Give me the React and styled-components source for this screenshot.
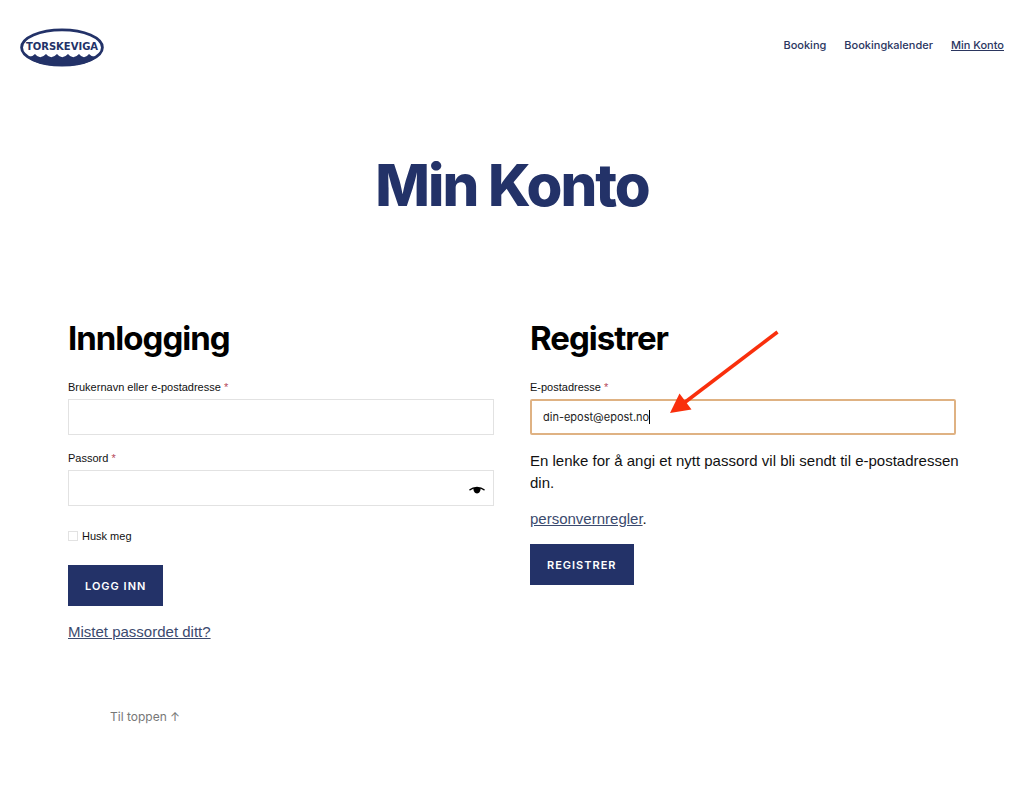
import React, { useState } from "react";

import styled, { createGlobalStyle } from "styled-components";

export default function App() {
  const [email, setEmail] = useState("din-epost@epost.no");

  return (
    <>
      <GlobalStyle />
      <Header id="top">
        <a href="#top" aria-label="Torskeviga">
          <Logo />
        </a>
        <Nav>
          <NavLink href="#booking">Booking</NavLink>
          <NavLink href="#kalender">Bookingkalender</NavLink>
          <NavLink href="#konto" $active>
            Min Konto
          </NavLink>
        </Nav>
      </Header>

      <main>
        <PageTitle>Min Konto</PageTitle>
        <Columns>
          <Form>
            <FormTitle>Innlogging</FormTitle>
            <Field>
              <Label htmlFor="username">
                Brukernavn eller e-postadresse <Required>*</Required>
              </Label>
              <Input id="username" type="text" />
            </Field>
            <Field>
              <Label htmlFor="password">
                Passord <Required>*</Required>
              </Label>
              <InputWrap>
                <Input id="password" type="password" />
                <EyeButton type="button" aria-label="Vis passord">
                  <EyeIcon />
                </EyeButton>
              </InputWrap>
            </Field>
            <Remember>
              <Checkbox type="checkbox" />
              Husk meg
            </Remember>
            <Button type="button">Logg inn</Button>
            <Text>
              <Link href="#passord">Mistet passordet ditt?</Link>
            </Text>
          </Form>

          <Form>
            <FormTitle>Registrer</FormTitle>
            <Field>
              <Label htmlFor="email">
                E-postadresse <Required>*</Required>
              </Label>
              <InputWrap>
                <Input
                  id="email"
                  type="email"
                  value={email}
                  onChange={(e) => setEmail(e.target.value)}
                  $focused
                />
                <Caret />
                <Arrow />
              </InputWrap>
            </Field>
            <Text>
              En lenke for å angi et nytt passord vil bli sendt til
              e-postadressen din.
            </Text>
            <Text>
              <Link href="#personvern">personvernregler</Link>.
            </Text>
            <Button type="button">Registrer</Button>
          </Form>
        </Columns>
      </main>

      <Footer>
        <ToTop href="#top">Til toppen ↑</ToTop>
      </Footer>
    </>
  );
}

const Logo = () => (
  <LogoSvg viewBox="0 0 84 40">
    <path
      d="M4 26 Q10 31 15 26 Q20 32.5 26 26 Q31 32.5 37 26 Q42 32.5 48 26 Q53 32.5 59 26 Q64 32.5 69 26 Q74 31 80 26 C73 35 58 38 42 38 C26 38 11 35 4 26Z"
      fill="#233268"
    />
    <ellipse
      cx="42"
      cy="19.5"
      rx="40.4"
      ry="17.6"
      fill="none"
      stroke="#233268"
      strokeWidth="2.8"
    />
    <text
      x="42"
      y="22"
      textAnchor="middle"
      fontFamily="'DejaVu Sans', sans-serif"
      fontWeight="700"
      fontSize="10"
      fill="#233268"
    >
      TORSKEVIGA
    </text>
  </LogoSvg>
);

const EyeIcon = () => (
  <svg width="16" height="8" viewBox="0 0 16 8">
    <path
      d="M1 3.8 C4.5 .6 11.5 .6 15 3.8"
      fill="none"
      stroke="#000"
      strokeWidth="1.5"
      strokeLinecap="round"
    />
    <path d="M4.4 2 H11.6 C11.8 5 10.4 7.4 8 7.4 C5.6 7.4 4.2 5 4.4 2Z" />
  </svg>
);

const Arrow = () => (
  <ArrowSvg viewBox="0 0 110 84">
    <path d="M107.5 2 L14 73" stroke="#f92f0c" strokeWidth="3.6" />
    <path d="M0 83 L9.5 63.5 L21.5 79.5 Z" fill="#f92f0c" />
  </ArrowSvg>
);

const GlobalStyle = createGlobalStyle`
  * {
    box-sizing: border-box;
  }
  body {
    margin: 0;
    background: #fff;
    color: #111;
    font-family: "Liberation Sans", Arial, sans-serif;
  }
`;
const Header = styled.header`
  display: flex;
  align-items: center;
  justify-content: space-between;
  padding: 28px 20px 0;
`;
const LogoSvg = styled.svg`
  display: block;
  width: 84px;
  height: 40px;
`;
const Nav = styled.nav`
  display: flex;
  gap: 18px;
  padding-bottom: 6px;
`;
const NavLink = styled.a`
  font: 500 11px/16px Inter, sans-serif;
  color: #2b365f;
  text-decoration: ${(props) => (props.$active ? "underline" : "none")};
`;
const PageTitle = styled.h1`
  margin: 82px 20px 0;
  text-align: center;
  font: 800 58px/70px Inter, sans-serif;
  letter-spacing: -2px;
  color: #233268;
`;
const Columns = styled.div`
  display: grid;
  grid-template-columns: 1fr 1fr;
  gap: 36px;
  padding: 0 68px;
  margin-top: 96px;
`;
const Form = styled.form`
  display: flex;
  flex-direction: column;
  align-items: flex-start;
`;
const FormTitle = styled.h2`
  margin: 0 0 19px;
  font: 700 33px/44px Inter, sans-serif;
  letter-spacing: -1px;
  color: #000;
`;
const Field = styled.div`
  width: 100%;
  margin-bottom: 15px;
`;
const Label = styled.label`
  display: block;
  margin-bottom: 4px;
  font-size: 11px;
  line-height: 16px;
`;
const Required = styled.span`
  color: #b5475a;
`;
const InputWrap = styled.div`
  position: relative;
`;
const Input = styled.input`
  display: block;
  width: 100%;
  height: 36px;
  padding: 0 ${(props) => (props.$focused ? "11px" : "12px")};
  border: ${(props) =>
    props.$focused ? "2px solid #dfb283" : "1px solid #e2e2e2"};
  border-radius: ${(props) => (props.$focused ? "2px" : "0")};
  background: #fff;
  color: #222;
  font: 400 11px/16px Inter, sans-serif;
  outline: none;
`;
const Caret = styled.span`
  position: absolute;
  top: 11px;
  left: 119px;
  width: 1px;
  height: 14px;
  background: #000;
`;
const ArrowSvg = styled.svg`
  position: absolute;
  top: -69px;
  left: 140px;
  width: 110px;
  height: 84px;
  pointer-events: none;
`;
const EyeButton = styled.button`
  position: absolute;
  top: 12px;
  right: 9px;
  display: flex;
  padding: 4px 0;
  border: none;
  background: none;
  cursor: pointer;
`;
const Remember = styled.label`
  display: flex;
  align-items: center;
  gap: 4px;
  margin: 7px 0 21px;
  font-size: 11px;
  line-height: 16px;
`;
const Checkbox = styled.input`
  appearance: none;
  width: 10px;
  height: 10px;
  margin: 0;
  border: 1px solid #e2e2e2;
  background: #fff;
  &:checked {
    background: #233268;
  }
`;
const Button = styled.button`
  height: 41px;
  margin-bottom: 15px;
  padding: 0 17px;
  border: none;
  background: #233268;
  color: #fff;
  font: 600 11px/16px Inter, sans-serif;
  letter-spacing: 1px;
  text-transform: uppercase;
  cursor: pointer;
`;
const Text = styled.p`
  margin: 0 -8px 14px 0;
  font-size: 15px;
  line-height: 22px;
`;
const Link = styled.a`
  color: #3b4a6e;
`;
const Footer = styled.footer`
  padding: 50px 110px 60px;
`;
const ToTop = styled.a`
  font: 400 12px/16px Inter, sans-serif;
  color: #777;
  text-decoration: none;
`;
